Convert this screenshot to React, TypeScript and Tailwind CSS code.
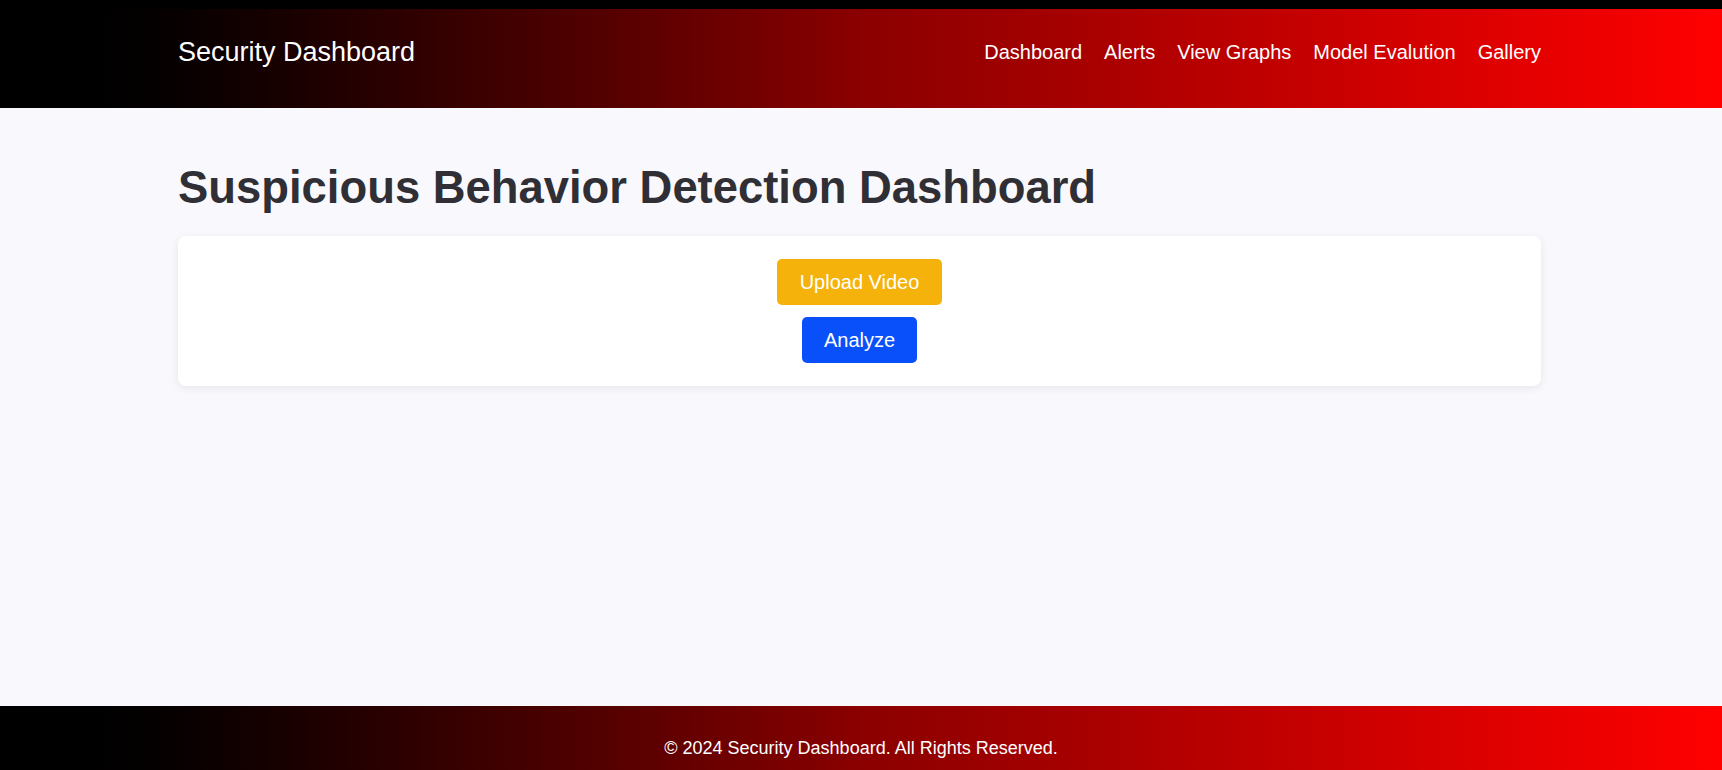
export default function App() {
  const links = ["Dashboard", "Alerts", "View Graphs", "Model Evalution", "Gallery"];

  return (
    <div className="flex h-[770px] flex-col overflow-hidden bg-[#f9f9fd] font-['Liberation_Sans',Arial,sans-serif]">
      <div className="h-[9px] bg-black" />
      <header className="h-[99px] bg-gradient-to-r from-black via-[#8b0000] to-[#ff0000]">
        <div className="ml-[178px] flex h-full w-[1363px] items-center justify-between pb-[13px]">
          <span className="text-[27px] text-white">Security Dashboard</span>
          <nav className="flex items-center gap-[22px]">
            {links.map((l) => (
              <a key={l} href="#" className="text-[20px] text-white">
                {l}
              </a>
            ))}
          </nav>
        </div>
      </header>

      <main className="ml-[178px] w-[1363px] flex-1">
        <h1 className="mt-[56px] mb-[24px] text-[45.4px] leading-[48px] font-bold text-[#2f2f35]">
          Suspicious Behavior Detection Dashboard
        </h1>
        <div className="flex flex-col items-center gap-[12px] rounded-lg bg-white p-[23px] shadow-[0_2px_10px_rgba(0,0,0,0.08)]">
          <button className="rounded-[5px] bg-[#f5b20a] px-[23px] py-[11px] text-[20px] leading-[24px] text-white">
            Upload Video
          </button>
          <button className="rounded-[5px] bg-[#0a50fa] px-[22px] py-[11px] text-[20px] leading-[24px] text-white">
            Analyze
          </button>
        </div>
      </main>

      <footer className="h-[64px] bg-gradient-to-r from-black via-[#8b0000] to-[#ff0000] pt-[32px] text-center text-[18px] leading-[21px] text-white">
        © 2024 Security Dashboard. All Rights Reserved.
      </footer>
    </div>
  );
}
